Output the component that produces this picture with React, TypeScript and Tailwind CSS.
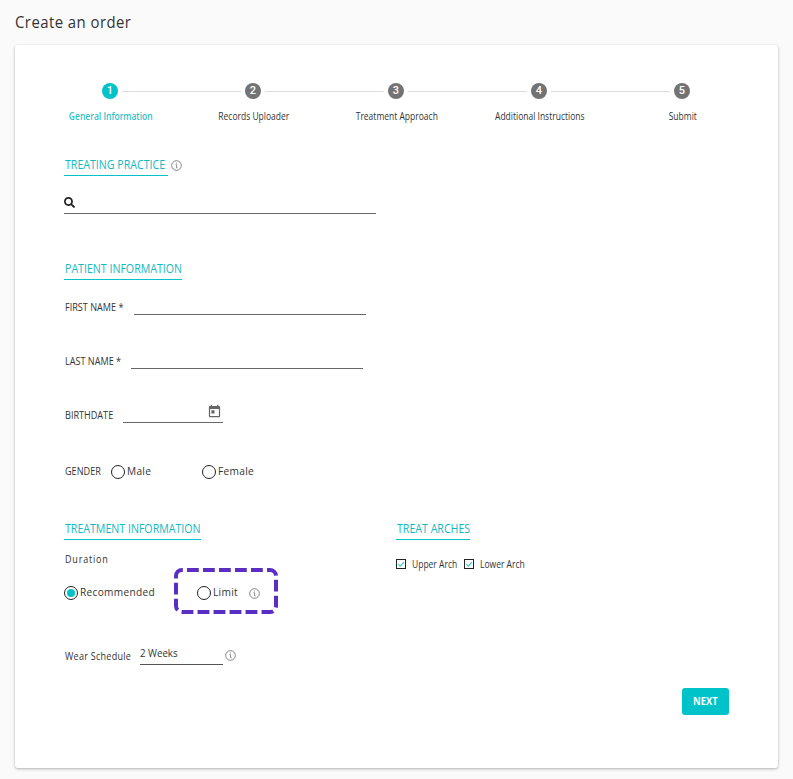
import { FaSearch } from "react-icons/fa";
import { MdToday } from "react-icons/md";

const steps = [
  "General Information",
  "Records Uploader",
  "Treatment Approach",
  "Additional Instructions",
  "Submit",
];

function InfoIcon() {
  return (
    <svg width="11" height="11" viewBox="0 0 11 11" fill="none" stroke="#777" className="shrink-0">
      <circle cx="5.5" cy="5.5" r="4.8" strokeWidth="0.9" />
      <path d="M4.5 4.6h1v3.2h1.2M5.5 2.7v.9" strokeWidth="0.8" />
    </svg>
  );
}

function SectionTitle({ text, width }: { text: string; width: string }) {
  return (
    <h2
      className={`${width} h-[21px] border-b border-[#00c3c9] pl-px text-xs leading-[20px] whitespace-nowrap text-[#12b9c0]`}
    >
      <span className="inline-block origin-left scale-x-[0.885] font-medium">{text}</span>
    </h2>
  );
}

function FieldLabel({ text, width }: { text: string; width: string }) {
  return (
    <label className={`${width} pl-px leading-4 whitespace-nowrap`}>
      <span className="inline-block origin-left scale-x-[0.91] text-[10px] font-medium">{text}</span>
    </label>
  );
}

function Radio({ label, checked = false }: { label: string; checked?: boolean }) {
  return (
    <label className="flex items-center gap-0.5 text-[11.5px] tracking-[0.35px] whitespace-nowrap">
      <span className="flex size-[14px] shrink-0 items-center justify-center rounded-full border border-[#222]">
        {checked && <span className="size-[8px] rounded-full bg-[#00c3c9]" />}
      </span>
      <span className="relative -top-px inline-block origin-left scale-x-[0.88] font-medium">{label}</span>
    </label>
  );
}

function Checkbox({ label }: { label: string }) {
  return (
    <label className="flex w-[68px] items-center gap-1.5 text-[10px] whitespace-nowrap">
      <svg width="10" height="10" viewBox="0 0 10 10" fill="none" className="shrink-0">
        <rect x="0.5" y="0.5" width="9" height="9" stroke="#222" />
        <path d="M2.3 5.2l1.9 1.9 3.8-4" stroke="#3cc5ce" strokeWidth="1.1" />
      </svg>
      <span className="inline-block origin-left scale-x-[0.85] font-medium">{label}</span>
    </label>
  );
}

export default function App() {
  return (
    <div className="h-[779px] w-[793px] bg-[#fafafa] pl-[15px] font-['Open_Sans',sans-serif] text-[#333]">
      <h1 className="h-[45px] text-base leading-[45px] tracking-[0.5px]">
        <span className="inline-block origin-left scale-x-[0.93] font-medium">Create an order</span>
      </h1>

      <main className="h-[723px] w-[763px] rounded-[3px] bg-white pt-[38px] pl-[49px] shadow-[0_1px_3px_rgba(0,0,0,0.3)]">
        {/* Stepper */}
        <ol className="-ml-[26px] flex">
          {steps.map((step, i) => (
            <li key={step} className="w-[143px]">
              <div className="flex items-center gap-1">
                <span className={`h-px flex-1 ${i > 0 ? "bg-[#ddd]" : ""}`} />
                <span
                  className={`flex size-4 items-center justify-center rounded-full pl-px font-['Roboto',sans-serif] text-[11px] leading-4 font-medium text-white ${
                    i === 0 ? "bg-[#00c3c9]" : "bg-[#737373]"
                  }`}
                >
                  {i + 1}
                </span>
                <span className={`h-px flex-1 ${i < steps.length - 1 ? "bg-[#ddd]" : ""}`} />
              </div>
              <p
                className={`mt-[9px] scale-x-[0.85] pl-[3px] text-center text-[10px] leading-4 whitespace-nowrap ${
                  i === 0 ? "font-semibold text-[#35c1c7]" : "font-medium"
                }`}
              >
                {step}
              </p>
            </li>
          ))}
        </ol>

        {/* Treating practice */}
        <div className="mt-[31px] flex items-center gap-[3px]">
          <SectionTitle text="TREATING PRACTICE" width="w-[104px]" />
          <InfoIcon />
        </div>
        <div className="flex h-[38px] w-[312px] items-center border-b border-[#666] pt-[15px]">
          <FaSearch className="size-[11px] text-[#222]" />
        </div>

        {/* Patient information */}
        <div className="mt-[45px]">
          <SectionTitle text="PATIENT INFORMATION" width="w-[118px]" />
        </div>
        <div className="flex h-[35px] items-end">
          <FieldLabel text="FIRST NAME *" width="w-[70px]" />
          <div className="h-6 w-[232px] border-b border-[#666]" />
        </div>
        <div className="flex h-[54px] items-end">
          <FieldLabel text="LAST NAME *" width="w-[67px]" />
          <div className="h-6 w-[232px] border-b border-[#666]" />
        </div>
        <div className="flex h-[54px] items-end">
          <FieldLabel text="BIRTHDATE" width="w-[59px]" />
          <div className="flex h-6 w-[100px] justify-end border-b border-[#666] pt-[5px] pr-px">
            <MdToday className="size-[15px] text-[#666]" />
          </div>
        </div>
        <div className="mt-[39px] flex h-5 items-center">
          <div className="pb-1">
            <FieldLabel text="GENDER" width="block w-[47px]" />
          </div>
          <div className="w-[91px]">
            <Radio label="Male" />
          </div>
          <Radio label="Female" />
        </div>

        {/* Treatment information */}
        <div className="mt-[37px] flex">
          <div className="w-[332px]">
            <SectionTitle text="TREATMENT INFORMATION" width="w-[137px]" />
            <p className="mt-[11px] pl-px text-[10px] leading-4 tracking-[0.9px]">
              <span className="inline-block origin-left scale-x-[0.9] font-medium">Duration</span>
            </p>
            <div className="mt-px flex h-[46px] items-center">
              <div className="w-[110px] pt-1">
                <Radio label="Recommended" checked />
              </div>
              <div className="relative flex h-[46px] w-[104px] items-center pt-1 pl-[23px]">
                <svg className="absolute inset-0" width="104" height="46" fill="none">
                  <rect
                    x="2"
                    y="2"
                    width="100"
                    height="42"
                    rx="6"
                    stroke="#5a2dc4"
                    strokeWidth="4"
                    strokeDasharray="11.8 4.2"
                    strokeDashoffset="-5"
                  />
                </svg>
                <div className="w-[52px]">
                  <Radio label="Limit" />
                </div>
                <InfoIcon />
              </div>
            </div>
          </div>
          <div>
            <SectionTitle text="TREAT ARCHES" width="w-[74px]" />
            <div className="mt-4 flex h-4 items-center">
              <Checkbox label="Upper Arch" />
              <Checkbox label="Lower Arch" />
            </div>
          </div>
        </div>
        <div className="mt-[31px] flex h-5 items-center">
          <div className="w-[76px] pt-0.5 pl-px text-[10px] tracking-[0.3px] whitespace-nowrap">
            <span className="inline-block origin-left scale-x-[0.9] font-medium">Wear Schedule</span>
          </div>
          <div className="mr-0.5 h-5 w-[83px] border-b border-[#555] text-[11px] leading-4">
            <span className="inline-block origin-left scale-x-[0.88] font-medium">2 Weeks</span>
          </div>
          <InfoIcon />
        </div>
        <button className="mt-[23px] ml-[618px] block h-[27px] w-[47px] rounded-[3px] bg-[#00c3c9] text-[11px] font-bold text-white">
          <span className="inline-block scale-x-[0.86]">NEXT</span>
        </button>
      </main>
    </div>
  );
}
